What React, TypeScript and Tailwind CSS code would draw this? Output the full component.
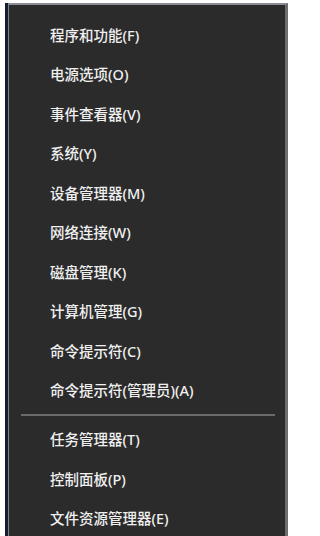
const mainItems = [
  "程序和功能(F)",
  "电源选项(O)",
  "事件查看器(V)",
  "系统(Y)",
  "设备管理器(M)",
  "网络连接(W)",
  "磁盘管理(K)",
  "计算机管理(G)",
  "命令提示符(C)",
  "命令提示符(管理员)(A)",
];

const toolItems = ["任务管理器(T)", "控制面板(P)", "文件资源管理器(E)"];

function MenuItem({ label }: { label: string }) {
  return (
    <div className="h-[39.5px] flex items-center pl-[41px] text-[14.5px] leading-none font-medium text-[#f0f0f0]">
      {label}
    </div>
  );
}

export default function App() {
  return (
    <div
      className="h-[536px] w-[292px] overflow-hidden bg-white pl-[5px] pr-[4px] pt-[3px]"
      style={{ fontFamily: '"Noto Sans", "Noto Sans CJK SC", sans-serif' }}
    >
      <div className="h-full border-l-[3px] border-[#141d33]">
        <div className="h-full border-l border-t-2 border-r-[3px] border-l-[#7d838c] border-t-[#8a8e94] border-r-[#6e6e6e] bg-[#2b2b2b] pt-[10px]">
          {/* Main */}
          {mainItems.map((item) => (
            <MenuItem key={item} label={item} />
          ))}

          {/* Separator */}
          <div className="py-[4px] pl-[12px] pr-[10px]">
            <div className="h-[1.5px] bg-[#6a6a6a]" />
          </div>

          {toolItems.map((item) => (
            <MenuItem key={item} label={item} />
          ))}
        </div>
      </div>
    </div>
  );
}
